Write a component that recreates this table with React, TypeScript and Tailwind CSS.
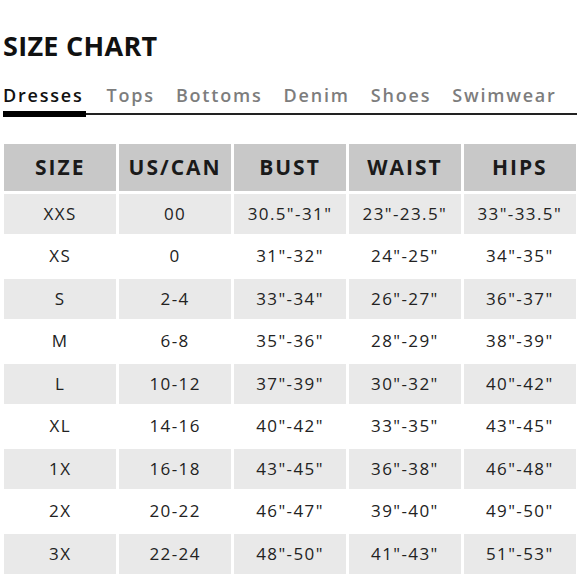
const headers = ["SIZE", "US/CAN", "BUST", "WAIST", "HIPS"];

const rows = [
  ["XXS", "00", '30.5"-31"', '23"-23.5"', '33"-33.5"'],
  ["XS", "0", '31"-32"', '24"-25"', '34"-35"'],
  ["S", "2-4", '33"-34"', '26"-27"', '36"-37"'],
  ["M", "6-8", '35"-36"', '28"-29"', '38"-39"'],
  ["L", "10-12", '37"-39"', '30"-32"', '40"-42"'],
  ["XL", "14-16", '40"-42"', '33"-35"', '43"-45"'],
  ["1X", "16-18", '43"-45"', '36"-38"', '46"-48"'],
  ["2X", "20-22", '46"-47"', '39"-40"', '49"-50"'],
  ["3X", "22-24", '48"-50"', '41"-43"', '51"-53"'],
];

const tabs = ["Dresses", "Tops", "Bottoms", "Denim", "Shoes", "Swimwear"];

export default function App() {
  return (
    <div className="w-[580px] h-[580px] bg-white px-[3px] font-['Open_Sans',sans-serif] overflow-hidden">
      <h1 className="pt-[29px] text-[27px] leading-[34px] font-bold tracking-[0.3px] text-[#111]">
        SIZE CHART
      </h1>

      <div className="mt-[20px] flex items-end gap-[21px] border-b-2 border-[#222] w-[574px]">
        {tabs.map((tab, i) =>
          i === 0 ? (
            <div
              key={tab}
              className="pr-[2px] pb-[4px] -mb-[4px] border-b-[6px] border-black text-[18px] leading-[24px] font-semibold tracking-[1.8px] text-[#111]"
            >
              {tab}
            </div>
          ) : (
            <div
              key={tab}
              className="pb-[6px] text-[18px] leading-[24px] font-semibold tracking-[1.8px] text-[#7d7d7d]"
            >
              {tab}
            </div>
          )
        )}
      </div>

      <div className="mt-[29px] ml-[1px] w-[572px] grid grid-cols-5 gap-[2.5px]">
        {headers.map((h) => (
          <div
            key={h}
            className="h-[47px] bg-[#c8c8c8] flex items-center justify-center text-[21px] font-bold tracking-[2px] text-[#1a1a1a]"
          >
            {h}
          </div>
        ))}
        {rows.map((row, r) =>
          row.map((cell, c) => (
            <div
              key={r + "-" + c}
              className={
                "h-[40px] flex items-center justify-center text-[17px] tracking-[1.4px] text-[#222] " +
                (r % 2 === 0 ? "bg-[#e9e9e9]" : "bg-white")
              }
            >
              {cell}
            </div>
          ))
        )}
      </div>
    </div>
  );
}
